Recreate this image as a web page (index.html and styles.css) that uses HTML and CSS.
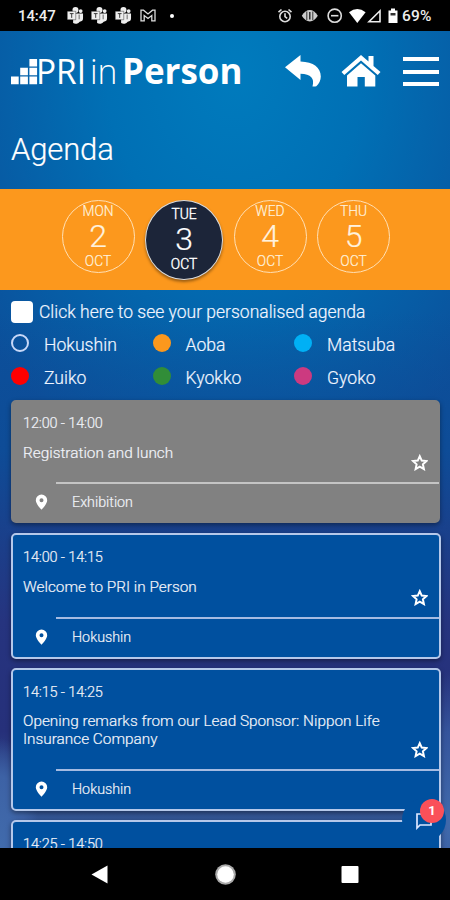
FILE: index.html
```html
<!DOCTYPE html>
<html lang="en">
<head>
<meta charset="utf-8">
<title>Agenda</title>
<link rel="stylesheet" href="styles.css">
</head>
<body>
<svg width="0" height="0" class="defs">
  <symbol id="teams" viewBox="0 0 18 18"><circle cx="9.500" cy="3.300" r="3.200"/><circle cx="15" cy="4.300" r="2"/><path d="M7 7h10.500v5a3.500 3.500 0 0 1-3.500 3.500 5 5 0 0 1-7 1.500z"/><path d="M.8 4.500h9v9h-9z" stroke="#000" stroke-width=".4"/><path d="M3.500 7h4M5.500 7v4.500" stroke="#333" stroke-width="1"/><path d="M13.400 8v5" stroke="#000" stroke-width=".6"/></symbol>
  <symbol id="star" viewBox="0 0 24 24"><path d="M12 3l2.700 6 6.500.7-4.900 4.400 1.400 6.600L12 17.300l-5.700 3.400 1.400-6.600-4.900-4.400 6.500-.7z" fill="none" stroke="#fff" stroke-width="2.700"/></symbol>
  <symbol id="pin" viewBox="0 0 12 16"><path fill-rule="evenodd" d="M6 .5a5.700 5.700 0 0 0-5.700 5.700C.3 10 6 15.700 6 15.700S11.700 10 11.700 6.200A5.700 5.700 0 0 0 6 .5zm0 3.700a2 2 0 1 1 0 4 2 2 0 0 1 0-4z" fill="#fff"/></symbol>
</svg>
<div class="phone">
  <div class="status">
    <span class="clock">14:47</span>
    <svg class="tm"><use href="#teams"/></svg>
    <svg class="tm"><use href="#teams"/></svg>
    <svg class="tm"><use href="#teams"/></svg>
    <svg class="gm" viewBox="0 0 16 13"><path d="M1 1.200h2.500L8 5l4.500-3.800H15v10.600h-3.200V6.500L8 9.500 4.200 6.500v5.300H1z" fill="none" stroke="#ddd" stroke-width="1.300"/></svg>
    <i class="dot"></i>
    <svg class="sys" viewBox="275 0 130 31" fill="none" stroke="#ddd" stroke-width="1.600">
      <circle cx="286" cy="16.500" r="5.200"/><path d="M286 13.200v3.500l2.200 1.700M279.500 12.200l3-2.700M292.500 12.200l-3-2.700"/>
      <path d="M302.800 15.700q3.500-5.700 8-5.700t8 5.700q-3.500 5.700-8 5.700t-8-5.700z" fill="#ccc" stroke="none"/><path d="M307.800 11.500v8.500M313.800 11.500v8.500" stroke="#333" stroke-width="1"/><path d="M310.800 12v7.500" stroke="#222" stroke-width="1.400"/>
      <circle cx="335.700" cy="15.700" r="6.600"/><path d="M332 15.700h7.400"/>
      <path d="M350 12.200q8.300-6.400 16.600 0L358.300 23z" fill="#fff" stroke="none"/>
      <path d="M370 21.700h11V10.800z" stroke="#eee"/>
      <path d="M389.500 10.500h2.500v-2h4v2h2.500v12.500h-9z" fill="#fff" stroke="none"/><path d="M391.500 13h5v2.500h-5z" fill="#333" stroke="none"/>
    </svg>
    <span class="pct">69%</span>
  </div>
  <main class="screen">
    <header class="bar">
      <svg class="logo" viewBox="0 -20 240 65" fill="#fff">
        <path d="M0 19.500h7.700v7.700H0zM9.200 19.500h7.700v7.700H9.200zM18.400 19.500h7.700v7.700h-7.700zM9.200 10.700h7.700v7.500H9.200zM18.400 10.700h7.700v7.500h-7.700zM18.400 1.900h7.700v7.500h-7.700z"/>
        <text class="l1" x="25" y="27" textLength="50" lengthAdjust="spacingAndGlyphs">PRI</text>
        <text class="l2" x="79" y="27" textLength="27.500" lengthAdjust="spacingAndGlyphs">in</text>
        <text class="l3" x="111" y="27" textLength="120.500" lengthAdjust="spacingAndGlyphs">Person</text>
      </svg>
      <svg class="back" viewBox="0 0 36 32"><path d="M0 12.300L15.500 0v6.500C28.500 7 35.800 12.500 35.800 21.500c0 4-1.800 7.300-4.500 9.700-1.500.5-3.800.2-3.800.2 2.300-8.200-1.500-12.200-12-12.700V25z" fill="#fff"/></svg>
      <svg class="home" viewBox="0 0 40 32" fill="#fff"><path d="M.5 17L20 0l7.500 6.500V1h5v10l7 6-2.800 3L20 5.500 3.300 20z"/><path d="M20 8.200L34.300 20.500v11H23.800V22h-7.300v9.500H6V20.500z"/></svg>
      <div class="burger"><i></i><i></i><i></i></div>
    </header>
    <h1>Agenda</h1>
    <nav class="days">
      <div class="day"><span>MON</span><b>2</b><span>OCT</span></div>
      <div class="day on"><span>TUE</span><b>3</b><span>OCT</span></div>
      <div class="day"><span>WED</span><b>4</b><span>OCT</span></div>
      <div class="day"><span>THU</span><b>5</b><span>OCT</span></div>
    </nav>
    <label class="own"><i class="box"></i><span>Click here to see your personalised agenda</span></label>
    <div class="legend">
      <div><i class="c ring"></i>Hokushin</div><div><i class="c orange"></i>Aoba</div><div><i class="c cyan"></i>Matsuba</div>
      <div><i class="c red"></i>Zuiko</div><div><i class="c green"></i>Kyokko</div><div><i class="c pink"></i>Gyoko</div>
    </div>
    <section class="list">
      <article class="card gray"><time>12:00 - 14:00</time><p>Registration and lunch</p><svg class="star"><use href="#star"/></svg><div class="place"><svg class="pin"><use href="#pin"/></svg><span>Exhibition</span></div></article>
      <article class="card"><time>14:00 - 14:15</time><p>Welcome to PRI in Person</p><svg class="star"><use href="#star"/></svg><div class="place"><svg class="pin"><use href="#pin"/></svg><span>Hokushin</span></div></article>
      <article class="card tall"><time>14:15 - 14:25</time><p>Opening remarks from our Lead Sponsor: Nippon Life Insurance Company</p><svg class="star"><use href="#star"/></svg><div class="place"><svg class="pin"><use href="#pin"/></svg><span>Hokushin</span></div></article>
      <article class="card"><time>14:25 - 14:50</time></article>
    </section>
    <div class="chat"><svg viewBox="0 0 18 18"><path d="M2 16V2h14v11H5z" fill="none" stroke="#dce6ff" stroke-width="1.700"/></svg><span>1</span></div>
  </main>
  <footer class="nav">
    <svg viewBox="0 0 450 52" fill="#fff"><path d="M91.500 26.500l16-9v18z"/><circle cx="225.500" cy="26.500" r="10.300" fill="#aaa"/><circle cx="225.500" cy="26.500" r="8.300"/><rect x="341.500" y="18" width="17" height="17" rx="1"/></svg>
  </footer>
</div>
</body>
</html>
```
FILE: styles.css
```css
* { box-sizing: border-box; }
body { margin: 0; background: #000; color: #fff; font-family: Roboto, "Liberation Sans", sans-serif; }
.defs { position: absolute; }
.phone { width: 450px; height: 900px; display: flex; flex-direction: column; overflow: hidden; }
.status { height: 31px; flex: none; display: flex; align-items: center; background: #000; padding-left: 18px; }
.clock { font-size: 15px; font-weight: 500; width: 48px; color: #eee; letter-spacing: -.1px; padding-top: 1px; }
.tm { width: 18px; height: 17px; margin-right: 6.200px; fill: #eee; }
.gm { width: 16px; height: 13px; margin-left: 1px; }
.dot { width: 4px; height: 4px; border-radius: 50%; background: #fff; margin-left: 14px; }
.sys { width: 130px; height: 31px; margin-left: 100px; }
.pct { font-size: 15.500px; font-weight: 500; margin-left: -1.500px; color: #eee; letter-spacing: .2px; padding-top: 1px; }
.screen {
  height: 817px; flex: none; position: relative; overflow: hidden;
  background:
    radial-gradient(ellipse 40px 110px at 0 817px, #416bac 0, #3d62a5 65%, transparent 100%),
    radial-gradient(ellipse 45px 150px at 450px 790px, #416bac 0, #35549c 60%, transparent 100%),
    linear-gradient(to bottom, #0e4c9700 280px, #10499499 420px, #26347f 590px, #26307a 700px, #345795 790px),
    radial-gradient(ellipse 320px 420px at 235px 40px, #007bbd 0, #0070b5 40%, #0b509b00 100%),
    #0b509b;
}
.bar { height: 80px; display: flex; padding: 26px 0 0 11px; }
.logo { width: 240px; height: 65px; flex: none; margin-top: -20px; }
.logo text { font-family: "Open Sans", sans-serif; font-size: 35px; }
.logo .l1 { font-weight: 400; }
.logo .l2 { font-weight: 300; }
.logo .l3 { font-weight: 700; }
.back { width: 36px; height: 32px; margin: -2px 0 0 33.500px; }
.home { width: 40px; height: 32px; margin: -2px 0 0 20.500px; }
.burger { width: 36px; height: 29px; margin: 0 0 0 21.500px; display: flex; flex-direction: column; justify-content: space-between; }
.burger i { height: 4px; background: #fff; }
h1 { margin: 0; padding: 20px 0 0 11px; height: 78px; font-weight: 300; font-size: 31px; letter-spacing: -.15px; line-height: 38px; -webkit-text-stroke: .2px #fff; }
.days { height: 101px; background: #fc981d; display: flex; padding: 11px 0 0 61.500px; gap: 10.500px; }
.day { width: 73px; height: 73px; flex: none; border: 1.500px solid #ffe0b5; border-radius: 50%; display: flex; flex-direction: column; align-items: center; color: #fff2dd; -webkit-text-stroke: .2px currentColor; }
.day span { font-size: 13.800px; line-height: 16px; font-weight: 300; margin-top: 2px; }
.day b { font-size: 32px; line-height: 34px; font-weight: 300; margin-top: 0; }
.day b + span { margin-top: 0; }
.day.on { width: 78px; height: 80px; background: #1c2539; border-color: #ddd; color: #fff; box-shadow: 0 2px 3px #0006; padding-top: 3px; }
.day.on span { font-weight: 300; -webkit-text-stroke: .4px #fff; }
.own { display: flex; height: 36px; padding: 11px 0 0 11px; font-size: 17.500px; font-weight: 300; line-height: 23px; color: #f0f5ff; -webkit-text-stroke: .2px #f0f5ff; }
.box { width: 22px; height: 22px; border-radius: 4px; background: #fff; margin-right: 6px; }
.legend { display: grid; grid-template-columns: 141.500px 141.500px 141px; grid-auto-rows: 33px; padding-left: 11px; height: 74px; font-size: 17.600px; font-weight: 300; line-height: 39px; color: #f0f5ff; -webkit-text-stroke: .2px #f0f5ff; }
.legend div { display: flex; }
.c { width: 18px; height: 18px; border-radius: 50%; margin: 8px 15px 0 0; }
.ring { border: 2px solid #c8d8f8; }
.orange { background: #fb981d; }
.cyan { background: #00b0f5; }
.red { background: #f00; }
.green { background: #318d38; }
.pink { background: #cc3a80; }
.list { padding: 0 9px 0 11px; }
.card { position: relative; height: 126px; margin-bottom: 9px; border: 2px solid #b5c8ea; border-radius: 5px; background: #00509f; padding: 14px 0 0 10px; box-shadow: 0 2px 5px #0006; -webkit-text-stroke: .2px #f0f2f8; }
.card.gray { background: #818181; border-color: #818181; height: 123px; margin-bottom: 10px; padding-top: 13px; width: 429px; }
.card.tall { height: 143px; }
.card time { display: block; font-size: 14.500px; line-height: 18px; color: #f0f2f8; letter-spacing: -.15px; font-weight: 300; }
.card p { margin: 11px 46px 0 0; font-size: 15.350px; line-height: 18px; font-weight: 300; height: 18px; color: #f3f5fb; }
.card.tall p { height: 36px; margin-top: 10px; }
.star { position: absolute; right: 11px; bottom: 51px; width: 17.500px; height: 17.500px; }
.gray .star { right: 10px; bottom: 50px; }
.place { display: flex; align-items: center; margin: 21px 0 0 33px; border-top: 2px solid #a5bbe2; height: 38px; }
.gray .place { border-color: #c4c4c4; margin-top: 20px; margin-right: -1px; }
.pin { width: 13px; height: 16px; margin-left: -21px; }
.place span { margin-left: 24px; font-size: 14.300px; font-weight: 300; color: #f0f2f8; }
.chat { position: absolute; left: 402px; top: 767px; width: 44px; height: 44px; border-radius: 50%; background: #00509f; }
.chat svg { position: absolute; left: 13px; top: 14px; width: 18px; height: 18px; }
.chat span { position: absolute; left: 18px; top: 1px; width: 24px; height: 24px; border-radius: 50%; background: #fa5059; font-size: 13px; font-weight: 700; line-height: 24px; text-align: center; }
.nav { height: 52px; flex: none; background: #000; }
.nav svg { width: 450px; height: 52px; }
```
